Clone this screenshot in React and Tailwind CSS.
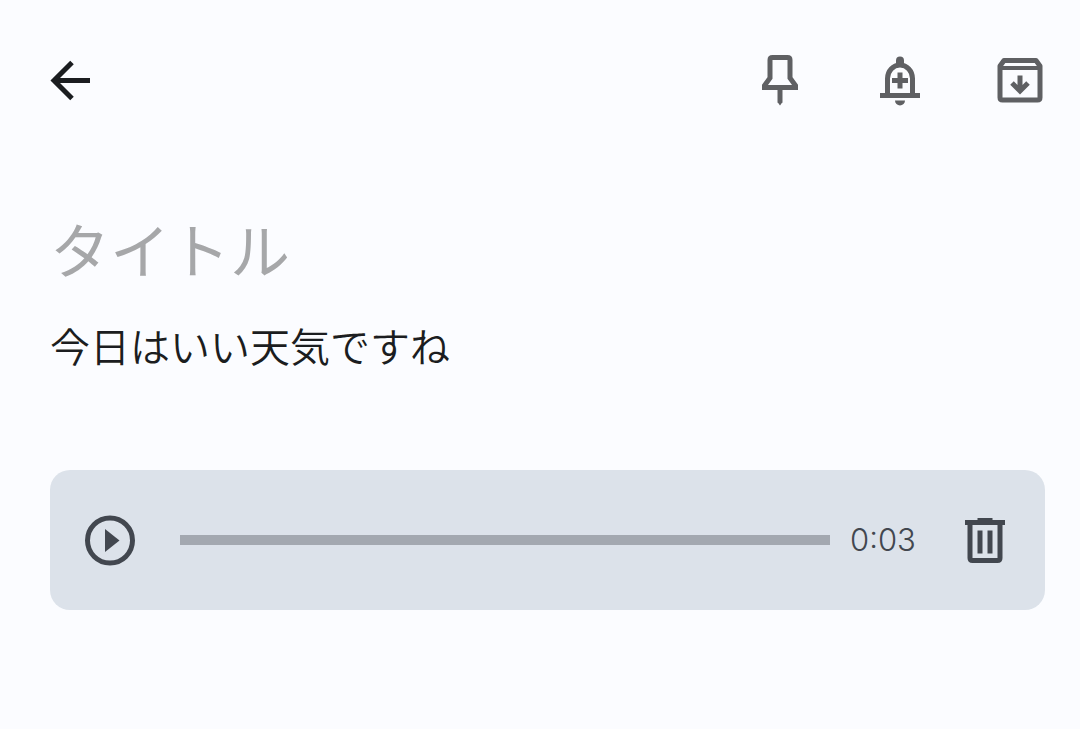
import { useState } from 'react';

function Icon({ children }) {
    return (
        <svg viewBox="0 0 80 80" className="block size-20" fill="none" stroke="currentColor" strokeWidth="5" aria-hidden="true">
            {children}
        </svg>
    );
}

function IconButton({ label, onClick, className, children }) {
    return (
        <button type="button" aria-label={label} onClick={onClick} className={className}>
            <Icon>{children}</Icon>
        </button>
    );
}

function Toolbar() {
    return (
        <header className="flex items-center justify-between pt-10 pr-5 pl-[30px]">
            <IconButton label="戻る" className="text-[#1b1d20]">
                <path d="M42 22.5 24 40.5l18 18M26 40.5h34" />
            </IconButton>
            <div className="flex items-center gap-10 text-[#5f6063]">
                <IconButton label="固定">
                    <path d="M30 38V20q0-2.500 2.500-2.500h15q2.500 0 2.500 2.500v18l5.500 7.500v2h-31v-2Z" />
                    <path d="M40 47v15.500" />
                    <path d="M37.5 62h5L40 65.500Z" fill="currentColor" stroke="none" />
                </IconButton>
                <IconButton label="リマインダーを追加">
                    <path d="M27.5 55V38.5a12.5 13.5 0 0 1 25 0V55M20 55.500h40M40 32.500v16M32 40.500h16" />
                    <path d="M36 26v-5.500a4 4 0 0 1 8 0V26ZM35 60.500h10a5 5 0 0 1-10 0Z" fill="currentColor" stroke="none" />
                </IconButton>
                <IconButton label="アーカイブ">
                    <path d="M24 20.500h32l4 5.500V57.500q0 2.500-2.500 2.500h-35q-2.500 0-2.500-2.500V26Z" strokeLinejoin="round" />
                    <path d="M20 28h40" strokeWidth="4" />
                    <path d="M40 35.500v14M32 43l8 8 8-8" />
                    <path d="M33 45h14l-7 7Z" fill="currentColor" stroke="none" />
                </IconButton>
            </div>
        </header>
    );
}

function AudioPlayer() {
    const [position, setPosition] = useState(0);

    return (
        <section className="mt-[95px] mr-[35px] ml-[50px] flex items-center rounded-[20px] bg-[#dce2ea] px-5 py-[30px] text-[#42474f]">
            <IconButton label="再生" className="shrink-0">
                <circle cx="40" cy="40.5" r="22.5" />
                <path d="M35 29v23l14.500-11.500Z" fill="currentColor" stroke="none" />
            </IconButton>
            <input
                type="range"
                aria-label="再生位置"
                min="0"
                max="3"
                value={position}
                onChange={(e) => setPosition(Number(e.target.value))}
                className="ml-[30px] h-[10px] min-w-0 flex-1 appearance-none bg-[#a3a8b0] [&::-webkit-slider-thumb]:size-0 [&::-webkit-slider-thumb]:appearance-none"
            />
            <time className="ml-5 w-[95px] shrink-0 font-['Inter',sans-serif] text-[31px] leading-10 font-[350]">0:03</time>
            <IconButton label="録音を削除" className="shrink-0">
                <path d="M20 22.500h40M25 24v34q0 2.500 2.500 2.500h25q2.500 0 2.500-2.500V24M35 30.500v23M45 30.500v23" />
                <path d="M32.5 18h15v3h-15Z" fill="currentColor" stroke="none" />
            </IconButton>
        </section>
    );
}

export default function App() {
    const [title, setTitle] = useState('');
    const [note, setNote] = useState('今日はいい天気ですね');

    return (
        <div className="min-h-screen bg-[#fbfcff] font-['Noto_Sans_CJK_JP',sans-serif]">
            <Toolbar />
            <main>
                <div className="mt-[88px] flex flex-col gap-[27px] px-[50px]">
                    <input
                        type="text"
                        aria-label="タイトル"
                        placeholder="タイトル"
                        value={title}
                        onChange={(e) => setTitle(e.target.value)}
                        className="h-20 w-full bg-transparent text-[60px] leading-[80px] text-[#1b1d20] outline-none placeholder:text-[#a6a7a9]"
                    />
                    <textarea
                        aria-label="メモ"
                        rows={1}
                        value={note}
                        onChange={(e) => setNote(e.target.value)}
                        className="block w-full resize-none overflow-hidden bg-transparent text-[40px] leading-[60px] font-[350] text-[#1b1d20] outline-none"
                    />
                </div>
                <AudioPlayer />
            </main>
        </div>
    );
}
